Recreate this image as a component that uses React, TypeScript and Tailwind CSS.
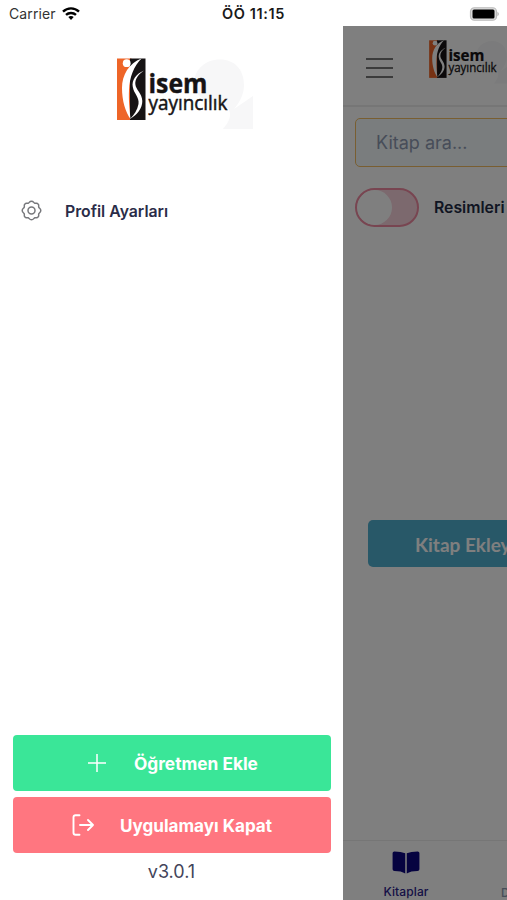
import React from 'react';

const Logo: React.FC<{ className?: string }> = ({ className }) => (
  <svg viewBox="0 0 137 72" className={className} fill="none">
    {/* Faded "2" shape behind the name */}
    <path
      d="M77 26C77 12 88 1.500 103 1.500S127 12 127 27C127 37 122 45 117 51L136 38V71H106C113 63 115 56 111 50C100 46 79 44 77 26Z"
      fill="#f7f7f8"
    />
    <rect x="0" y="0.500" width="14.500" height="61.500" fill="#ee6528" />
    <rect x="13" y="0.500" width="15.500" height="61.500" fill="#161314" />
    <circle cx="9.700" cy="5.200" r="3.900" fill="#fff" />
    <path d="M24.500 0.500C12 5 5 17 5 30C5 43 8.500 54 13.500 61C12.500 50 11.500 42 12 32C12.500 19 17 8 24.500 0.500Z" fill="#fff" />
    <path d="M27 12.500C19 16 14.500 22 15.800 29C17 36 22.500 39 21.500 46C20.500 52 17 57 13 61C20 57 25.500 50 25.300 43C25 35 18.800 32 18.300 26C18 21 21.500 16 27 12.500Z" fill="#fff" />
    <text x="31.500" y="34.500" textLength="59" lengthAdjust="spacingAndGlyphs" fontFamily="'Open Sans', sans-serif" fontWeight="700" fontSize="27.500" fill="#161314" stroke="#161314" strokeWidth="0.400">isem</text>
    <text x="31.500" y="52" textLength="79" lengthAdjust="spacingAndGlyphs" fontFamily="'Open Sans', sans-serif" fontWeight="500" fontSize="20.500" fill="#161314" stroke="#161314" strokeWidth="0.500">yayıncılık</text>
  </svg>
);

const StatusBar: React.FC = () => (
  <div className="relative h-[26px] flex items-center justify-between bg-white pl-[9px] pr-[7px] pt-[1px] text-black">
    <div className="flex items-center gap-[6px]">
      <span className="text-[14px] leading-none tracking-[0.1px] text-[#333]">Carrier</span>
      <svg width="18" height="13" viewBox="0 0 18 13" fill="none" stroke="#000" strokeWidth="2.400">
        <path d="M1 4.600C5.500 0.300 12.500 0.300 17 4.600" />
        <path d="M4 7.900C6.800 5.300 11.200 5.300 14 7.900" />
        <path d="M6.300 10.100C7.800 8.700 10.200 8.700 11.700 10.100L9 12.900Z" fill="#000" stroke="none" />
      </svg>
    </div>
    <span className="absolute left-[222px] top-[7px] text-[14.5px] leading-none font-semibold tracking-[0.6px] text-[#1a1a1a]">ÖÖ 11:15</span>
    <svg width="31" height="14" viewBox="0 0 31 14">
      <rect x="1.500" y="0.750" width="26" height="12.500" rx="3.800" fill="#ddd" stroke="#bbb" strokeWidth="1.200" />
      <rect x="3.500" y="2.500" width="22" height="9" rx="1.500" fill="#000" />
      <path d="M28.500 4.800C30.200 5.500 30.200 8.500 28.500 9.200Z" fill="#aaa" />
    </svg>
  </div>
);

const GearIcon: React.FC = () => (
  <svg width="21" height="21" viewBox="0 0 24 24" fill="none" stroke="#77787c" strokeWidth="1.700" strokeLinejoin="round">
    <path d="M12 1.400C14.400 1.400 14.400 3.200 15.800 3.700C17.200 4.200 18.200 3 19.500 4.500C21 5.800 19.800 6.800 20.300 8.200C20.800 9.600 22.600 9.600 22.600 12C22.600 14.400 20.800 14.400 20.300 15.800C19.800 17.200 21 18.200 19.500 19.500C18.200 21 17.200 19.800 15.800 20.300C14.400 20.800 14.400 22.600 12 22.600C9.600 22.600 9.600 20.800 8.200 20.300C6.800 19.800 5.800 21 4.500 19.500C3 18.200 4.200 17.200 3.700 15.800C3.200 14.400 1.400 14.400 1.400 12C1.400 9.600 3.200 9.600 3.700 8.200C4.200 6.800 3 5.800 4.500 4.500C5.800 3 6.800 4.200 8.200 3.700C9.600 3.200 9.600 1.400 12 1.400Z" />
    <circle cx="12" cy="12" r="4" />
  </svg>
);

const Drawer: React.FC = () => (
  <aside className="w-[343px] shrink-0 flex flex-col bg-white">
    <Logo className="w-[137px] h-[72px] ml-[117px] mt-[32px]" />

    <button className="flex items-center h-[40px] mt-[60px] pl-[21px] text-left">
      <GearIcon />
      <span className="ml-[23px] pt-[3px] text-[15.8px] font-semibold text-[#2a2c48]">Profil Ayarları</span>
    </button>

    <div className="mt-auto px-3 pl-[13px] flex flex-col gap-[6px]">
      <button className="h-[56px] rounded-[4px] bg-[#3ae698] flex items-center pl-[75px] text-white">
        <svg width="18" height="18" viewBox="0 0 18 18" stroke="currentColor" strokeWidth="1.500">
          <path d="M9 0V18M0 9H18" />
        </svg>
        <span className="ml-[28px] pt-px text-[17.3px] font-bold">Öğretmen Ekle</span>
      </button>
      <button className="h-[56px] rounded-[4px] bg-[#ff7680] flex items-center pl-[59px] text-white">
        <svg width="22" height="22" viewBox="0 0 22 22" fill="none" stroke="currentColor" strokeWidth="1.900" strokeLinecap="round" strokeLinejoin="round">
          <path d="M7.500 1.200H3.500Q1.500 1.200 1.500 3.200V18.800Q1.500 20.800 3.500 20.800H7.500" />
          <path d="M8 11H21M16 6L21 11L16 16" />
        </svg>
        <span className="ml-[26px] pt-px text-[17.1px] font-bold">Uygulamayı Kapat</span>
      </button>
    </div>
    <p className="h-[47px] pt-[5px] text-center text-[18px] text-[#43455a]">v3.0.1</p>
  </aside>
);

const BooksScreen: React.FC = () => (
  <main className="relative flex-1 min-w-0 overflow-hidden flex flex-col bg-white">
    <header className="h-[81px] shrink-0 flex items-start border-b-2 border-[#ececec]">
      <div className="w-[27px] shrink-0 ml-[23px] mt-[32px] flex flex-col gap-[7px]">
        <span className="h-[2px] bg-[#777]" />
        <span className="h-[2px] bg-[#777]" />
        <span className="h-[2px] bg-[#777]" />
      </div>
      <Logo className="w-[84px] h-[44px] shrink-0 ml-[36px] mt-[14px]" />
    </header>

    <div className="w-[340px] shrink-0 h-[49px] ml-[12px] mt-[11px] rounded-[5px] border-[1.5px] border-[#f3bd62] bg-[#f5fafc] flex items-center pl-[20px] text-[18px] text-[#8f9bb3]">
      Kitap ara...
    </div>

    <div className="flex items-center ml-[12px] mt-[21px]">
      <div className="w-[64px] h-[39px] shrink-0 rounded-full border-2 border-[#f08ba2] bg-[#f8d3dc] overflow-hidden">
        <div className="size-[35px] rounded-full bg-white" />
      </div>
      <span className="ml-[15px] pt-px whitespace-nowrap text-[15.8px] font-semibold text-[#222b45]">Resimleri Göster</span>
    </div>

    <button className="w-[264px] shrink-0 h-[47px] ml-[25px] mt-[293px] rounded-[5px] bg-[#50b0d0] flex items-center justify-center whitespace-nowrap font-[Lato] font-bold text-[19px] text-white">
      <span className="w-[170px] pt-[3px] text-left">Kitap Ekleyiniz</span>
    </button>

    <nav className="mt-auto h-[60px] shrink-0 flex border-t border-[#ececec]">
      <div className="w-[126px] shrink-0 flex flex-col items-center pt-[10px]">
        <svg width="28" height="24" viewBox="0 0 28 24" fill="#0c0680">
          <path d="M0 2Q0 0.300 2 0.400Q9 0.600 13.200 2.400V23.500Q9 20.900 2 20.900Q0 20.900 0 19Z" />
          <path d="M28 2Q28 0.300 26 0.400Q19 0.600 14.800 2.400V23.500Q19 20.900 26 20.900Q28 20.900 28 19Z" />
        </svg>
        <span className="mt-[10px] text-[12px] leading-4 font-medium tracking-[0.1px] text-[#2c228c]">Kitaplar</span>
      </div>
      <div className="w-[126px] shrink-0 flex flex-col pl-[32px] pt-[44px]">
        <span className="text-[12px] leading-4 font-medium text-[#8f9bb3]">Dersler</span>
      </div>
    </nav>

    {/* Backdrop */}
    <div className="absolute inset-0 bg-black/50" />
  </main>
);

export default function App() {
  return (
    <div className="w-full h-screen overflow-hidden flex flex-col bg-white font-[Inter,sans-serif]">
      <StatusBar />
      <div className="flex-1 min-h-0 flex">
        <Drawer />
        <BooksScreen />
      </div>
    </div>
  );
}
